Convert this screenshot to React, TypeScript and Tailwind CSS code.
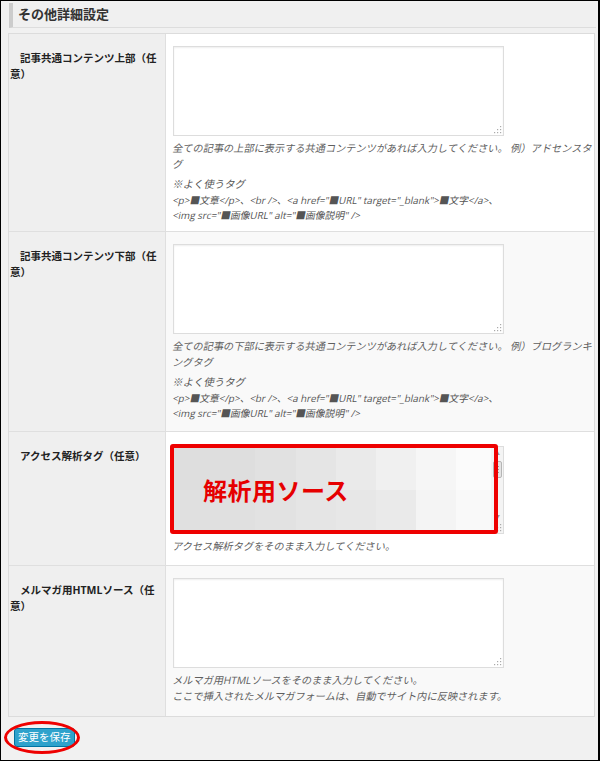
import React from 'react';

const font = 'font-["Open_Sans","Noto_Sans_CJK_JP",sans-serif]';

const Grip = () => (
  <svg className="absolute right-[1px] bottom-[1px]" width="8" height="8" viewBox="0 0 8 8">
    <rect x="6" y="0" width="1.2" height="1.2" fill="#aaa" />
    <rect x="3" y="3" width="1.2" height="1.2" fill="#aaa" />
    <rect x="6" y="3" width="1.2" height="1.2" fill="#aaa" />
    <rect x="0" y="6" width="1.2" height="1.2" fill="#aaa" />
    <rect x="3" y="6" width="1.2" height="1.2" fill="#aaa" />
    <rect x="6" y="6" width="1.2" height="1.2" fill="#aaa" />
  </svg>
);

const TextBox = () => (
  <div className="relative w-[331px] h-[90px] bg-white border border-[#dddddd] shadow-[inset_0_1px_2px_rgba(0,0,0,0.07)]">
    <Grip />
  </div>
);

// slanted line (the CJK font has no italic face)
const L: React.FC<{ children: React.ReactNode; className?: string }> = ({ children, className }) => (
  <div className={className}>
    <span className="inline-block -skew-x-12">{children}</span>
  </div>
);

const TagHelp = () => (
  <div className="mt-[4px] text-[9.8px] leading-[15px] text-[#555] whitespace-nowrap">
    <L className="text-[10.4px] leading-[17px]">※よく使うタグ</L>
    <L>{'<p>'}■文章{'</p>'}、{'<br />'}、{'<a href="'}■URL{'" target="_blank">'}■文字{'</a>'}、</L>
    <L>{'<img src="'}■画像URL{'" alt="'}■画像説明{'" />'}</L>
  </div>
);

const Row: React.FC<{ label: React.ReactNode; alt?: boolean; h: string; children: React.ReactNode }> = ({ label, alt, h, children }) => (
  <div className={`flex ${h} border-b border-[#dfdfdf] last:border-b-0`}>
    <div className="w-[157px] shrink-0 bg-[#efefef] border-r border-[#dfdfdf] pt-[16px] pl-[1px] indent-[10px] text-[10.5px] leading-[16px] font-bold text-[#222]">
      {label}
    </div>
    <div className={`flex-1 pl-[7px] pt-[12px] ${alt ? 'bg-[#f9f9f9]' : 'bg-white'}`}>{children}</div>
  </div>
);

const Desc: React.FC<{ lines: string[] }> = ({ lines }) => (
  <div className="mt-[4px] text-[10.2px] leading-[16px] text-[#5f5f5f] whitespace-nowrap">
    {lines.map((t, i) => (
      <L key={i}>{t}</L>
    ))}
  </div>
);

const mosaicTop = ['#dedede', '#e1e1e1', '#e5e5e5', '#eaeaea', '#f0f0f0', '#f6f6f6', '#fbfbfb'];
const mosaicBottom = ['#e0e0e0', '#e2e2e2', '#e5e5e5', '#e7e7e7', '#eaeaea', '#f4f4f4', '#f9f9f9'];
const mosaicW = [81, 41, 40, 40, 40, 40, 36];

const AnalyticsBox = () => (
  <div className="relative w-[331px] h-[88px] bg-white border border-[#dddddd]">
    <div className="flex flex-col h-full w-[318px]">
      <div className="flex flex-1">
        {mosaicTop.map((c, i) => (
          <div key={i} className="h-full" style={{ width: mosaicW[i], background: c }} />
        ))}
      </div>
      <div className="flex flex-1">
        {mosaicBottom.map((c, i) => (
          <div key={i} className="h-full" style={{ width: mosaicW[i], background: c }} />
        ))}
      </div>
    </div>
    {/* scrollbar */}
    <div className="absolute right-0 top-0 bottom-0 w-[12px] bg-[#f4f4f4] flex flex-col items-center">
      <span className="mt-[3px] text-[6px] leading-[6px] text-[#999]">▲</span>
      <div className="mt-[5px] w-[9px] h-[17px] bg-[#e4e4e4] border border-[#b5b5b5] rounded-[2px] flex flex-col items-center justify-center gap-[2px]">
        <span className="block w-[4px] h-px bg-[#999]" />
        <span className="block w-[4px] h-px bg-[#999]" />
        <span className="block w-[4px] h-px bg-[#999]" />
      </div>
      <span className="mt-auto mb-[13px] text-[6px] leading-[6px] text-[#999]">▼</span>
    </div>
    <Grip />
    {/* annotation */}
    <div className="absolute left-[-4px] top-[-3px] w-[328px] h-[90px] border-[4px] border-[#ee0000] rounded-[3px]" />
    <div className="absolute left-[29px] top-[28px] text-[24px] leading-[32px] font-bold text-[#e60000] tracking-[0.5px]">
      解析用ソース
    </div>
  </div>
);

export default function App() {
  return (
    <div className={`${font} w-[600px] h-[761px] box-border bg-[#f1f1f1] border-l border-t border-b border-r-2 border-black pl-[7px] pr-[2px] overflow-hidden`}>
      <div className="mt-[2px] ml-[1px] h-[25px] border-l-[4px] border-[#cccccc] border-b border-b-[#dddddd] bg-[#f0f0f0] pl-[5px] flex items-center">
        <span className="text-[13px] font-bold text-[#333]">その他詳細設定</span>
      </div>

      <div className="mt-[5px] mr-[1px] border border-[#dcdcdc]">
        <Row h="h-[198px]" label={<>記事共通コンテンツ上部（任<br />意）</>}>
          <TextBox />
          <Desc lines={['全ての記事の上部に表示する共通コンテンツがあれば入力してください。 例）アドセンスタ', 'グ']} />
          <TagHelp />
        </Row>
        <Row alt h="h-[200px]" label={<>記事共通コンテンツ下部（任<br />意）</>}>
          <TextBox />
          <Desc lines={['全ての記事の下部に表示する共通コンテンツがあれば入力してください。 例）ブログランキ', 'ングタグ']} />
          <TagHelp />
        </Row>
        <Row h="h-[134px]" label="アクセス解析タグ（任意）">
          <div className="h-[2px]" />
          <AnalyticsBox />
          <Desc lines={['アクセス解析タグをそのまま入力してください。']} />
        </Row>
        <Row alt h="h-[150px]" label={<>メルマガ用HTMLソース（任<br />意）</>}>
          <TextBox />
          <Desc
            lines={[
              'メルマガ用HTMLソースをそのまま入力してください。',
              'ここで挿入されたメルマガフォームは、自動でサイト内に反映されます。',
            ]}
          />
        </Row>
      </div>

      <div className="relative mt-[11px] ml-[6px] w-fit flex">
        <button className="h-[19px] px-[3px] bg-[#2ea2cc] border border-[#0074a2] rounded-[3px] text-white text-[10.5px] leading-[17px]">
          変更を保存
        </button>
        <div className="absolute left-[-10px] top-[-7px] w-[76px] h-[33px] rounded-[50%] border-[3px] border-[#ee0000]" />
      </div>
    </div>
  );
}
